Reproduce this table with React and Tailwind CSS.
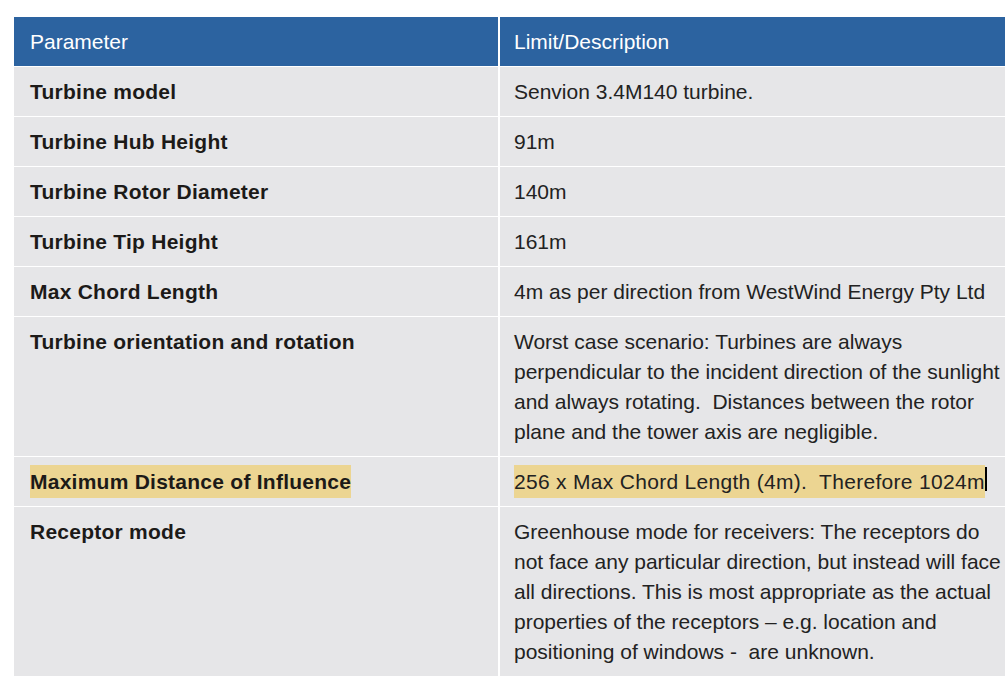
import React from "react";

const rows = [
  { p: "Turbine model", d: ["Senvion 3.4M140 turbine."] },
  { p: "Turbine Hub Height", d: ["91m"] },
  { p: "Turbine Rotor Diameter", d: ["140m"] },
  { p: "Turbine Tip Height", d: ["161m"] },
  { p: "Max Chord Length", d: ["4m as per direction from WestWind Energy Pty Ltd"] },
  {
    p: "Turbine orientation and rotation",
    d: [
      "Worst case scenario: Turbines are always",
      "perpendicular to the incident direction of the sunlight",
      "and always rotating.\u00a0 Distances between the rotor",
      "plane and the tower axis are negligible.",
    ],
  },
  { p: "Maximum Distance of Influence", d: ["256 x Max Chord Length (4m).\u00a0 Therefore 1024m"], hl: true },
  {
    p: "Receptor mode",
    d: [
      "Greenhouse mode for receivers: The receptors do",
      "not face any particular direction, but instead will face",
      "all directions. This is most appropriate as the actual",
      "properties of the receptors \u2013 e.g. location and",
      "positioning of windows -\u00a0 are unknown.",
    ],
  },
];

export default function App() {
  return (
    <div
      className="w-[1005px] h-[683px] overflow-hidden bg-white pt-[17px] pl-[14px]"
      style={{ fontFamily: '"Liberation Sans", Arial, sans-serif' }}
    >
      <div className="w-[1000px] text-[21px] leading-[30px]">
        <div className="grid grid-cols-[486px_1fr] h-[49px] bg-[#2c63a0] text-white">
          <div className="flex items-center pl-[16px] border-r-2 border-white">Parameter</div>
          <div className="flex items-center pl-[14px]">Limit/Description</div>
        </div>
        {rows.map((r, i) => (
          <div
            key={i}
            className="grid grid-cols-[486px_1fr] bg-[#e6e6e8] border-t border-white"
          >
            <div className="pl-[16px] pt-[10px] pb-[9px] border-r-2 border-white font-bold tracking-[0.25px] text-[#1c1a18] whitespace-nowrap">
              {r.hl ? <span className="bg-[#ecd592] py-[5px]">{r.p}</span> : r.p}
            </div>
            <div className="pl-[14px] pt-[10px] pb-[9px] text-[#222222] whitespace-nowrap">
              {r.hl ? (
                <span className="relative bg-[#ecd592] py-[5px] tracking-[0.3px]">
                  {r.d[0]}
                  <span className="absolute right-[-2px] top-[2px] h-[24px] w-[2px] bg-black"></span>
                </span>
              ) : (
                r.d.map((l, j) => <div key={j}>{l}</div>)
              )}
            </div>
          </div>
        ))}
      </div>
    </div>
  );
}
